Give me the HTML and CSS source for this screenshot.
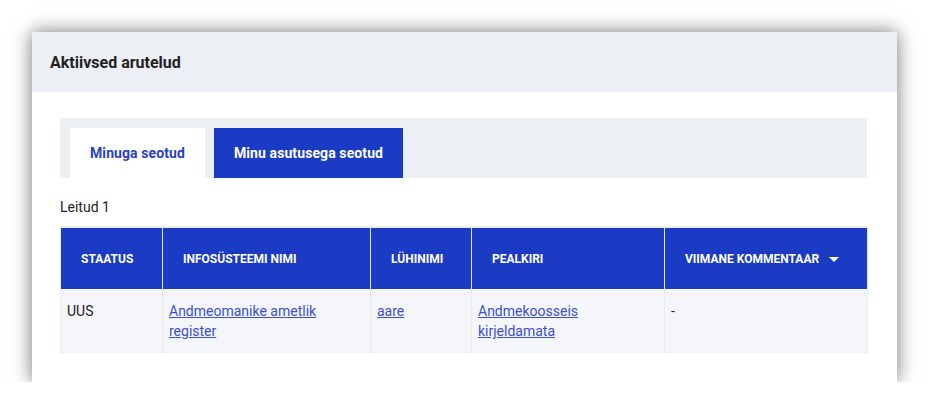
FILE: index.html
```html
<!DOCTYPE html>
<html lang="et">
<head>
<meta charset="utf-8">
<title>Aktiivsed arutelud</title>
<link rel="stylesheet" href="styles.css">
</head>
<body>
<div class="card">
  <div class="card-header">Aktiivsed arutelud</div>
  <div class="card-body">
    <div class="tabs">
      <div class="tab tab-active">Minuga seotud</div>
      <div class="tab tab-other">Minu asutusega seotud</div>
    </div>
    <div class="found">Leitud 1</div>
    <table class="grid">
      <colgroup>
        <col class="c1"><col class="c2"><col class="c3"><col class="c4"><col class="c5">
      </colgroup>
      <thead>
        <tr>
          <th>STAATUS</th>
          <th>INFOSÜSTEEMI NIMI</th>
          <th>LÜHINIMI</th>
          <th>PEALKIRI</th>
          <th><span class="sorth">VIIMANE KOMMENTAAR <svg class="caret" width="10" height="6" viewBox="0 0 10 6"><path d="M0 0 H10 L5 5 Z" fill="#fff"/></svg></span></th>
        </tr>
      </thead>
      <tbody>
        <tr>
          <td>UUS</td>
          <td><a href="#">Andmeomanike ametlik register</a></td>
          <td><a href="#">aare</a></td>
          <td><a href="#">Andmekoosseis kirjeldamata</a></td>
          <td>-</td>
        </tr>
      </tbody>
    </table>
  </div>
</div>
</body>
</html>
```

FILE: styles.css
```css
html, body {
  margin: 0;
  padding: 0;
  background: #ffffff;
}
body {
  font-family: Roboto, "Liberation Sans", Arial, sans-serif;
  color: #222;
  padding: 32px 0 0 32px;
}
.card {
  width: 865px;
  height: 350px;
  background: #fff;
  box-shadow: 0 0 18px rgba(0, 0, 0, 0.55);
  box-sizing: border-box;
}
.card-header {
  height: 60px;
  background: #eceff4;
  display: flex;
  align-items: center;
  padding-left: 18px;
  font-size: 16px;
  font-weight: 700;
  color: #222;
}
.card-body {
  padding: 26px 30px 30px 28px;
}
.tabs {
  background: #eceff4;
  height: 60px;
  box-sizing: border-box;
  padding: 10px 0 0 10px;
  display: flex;
  gap: 9px;
}
.tab {
  height: 50px;
  display: flex;
  align-items: center;
  justify-content: center;
  font-size: 14px;
  font-weight: 700;
  letter-spacing: 0.1px;
  box-sizing: border-box;
}
.tab-active {
  width: 135px;
  background: #fff;
  color: #2b3fc6;
}
.tab-other {
  width: 189px;
  background: #1c3bc4;
  color: #fff;
}
.found {
  font-size: 14px;
  line-height: 20px;
  margin-top: 19px;
  color: #222;
}
.grid {
  margin-top: 9px;
  width: 807px;
  border-collapse: collapse;
  table-layout: fixed;
  border: 1px solid #eceff4;
}
.c1 { width: 102px; }
.c2 { width: 208px; }
.c3 { width: 101px; }
.c4 { width: 193px; }
.c5 { width: 203px; }
.grid th {
  background: #1c3bc4;
  color: #fff;
  font-size: 12px;
  font-weight: 700;
  text-align: left;
  height: 62px;
  box-sizing: border-box;
  padding: 0 0 0 20px;
  border-top: 2px solid #eceff4;
  border-left: 1px solid #dfe4f5;
  border-right: 1px solid #dfe4f5;
  vertical-align: middle;
}
.grid th:first-child { border-left: 1px solid #eceff4; }
.sorth {
  display: inline-flex;
  align-items: center;
}
.caret {
  margin-left: 10px;
  margin-top: 3px;
}
.grid td {
  background: #f5f6f9;
  font-size: 14px;
  line-height: 20px;
  vertical-align: top;
  padding: 12px 6px 11px 6px;
  border-left: 1px solid #e8ebf1;
  color: #222;
}
.grid td:first-child { border-left: 1px solid #eceff4; }
.grid a {
  color: #3b4fd0;
  text-decoration: underline;
}
```
